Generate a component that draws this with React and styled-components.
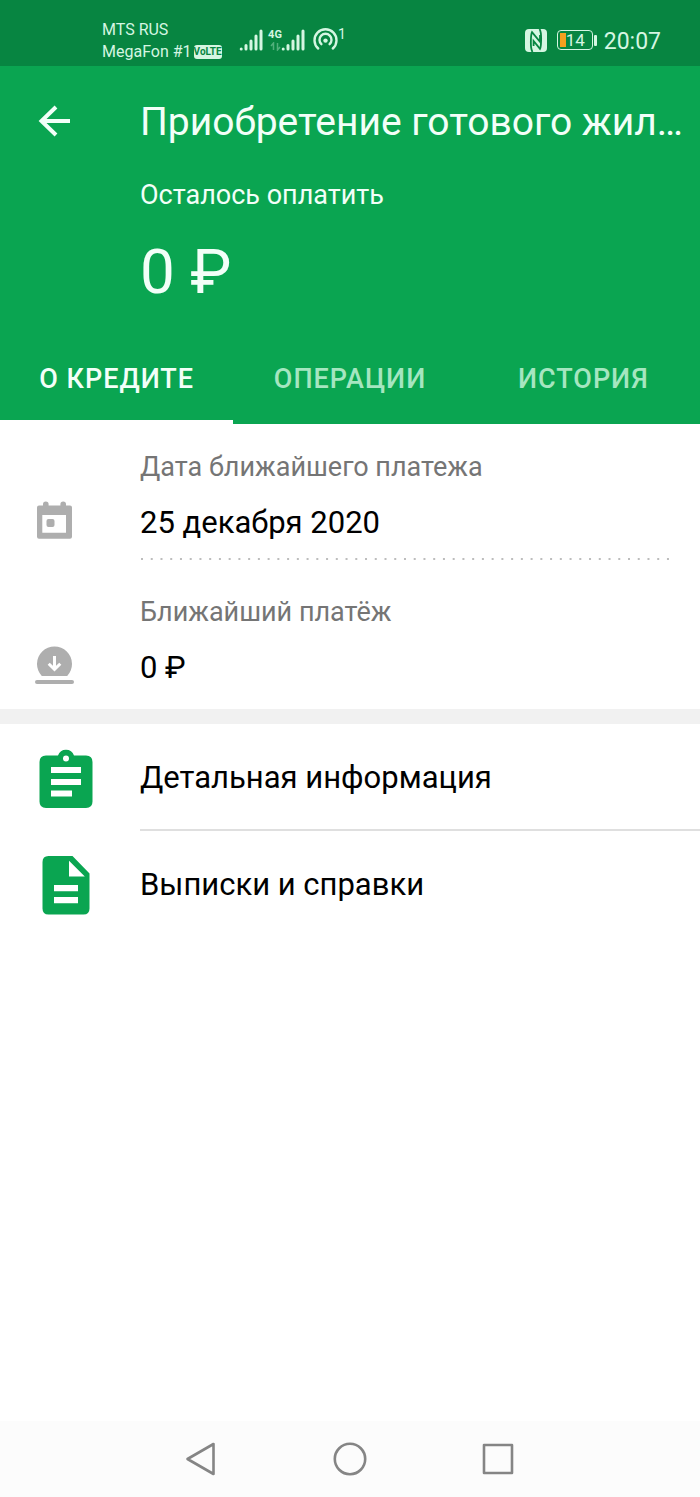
import React from "react";
import styled, { createGlobalStyle } from "styled-components";

const GlobalStyle = createGlobalStyle`
  *, *::before, *::after { box-sizing: border-box; }
  body { margin: 0; background: #fff; font-family: Roboto, "Noto Sans", sans-serif; color: #000; }
  button { font: inherit; border: 0; padding: 0; margin: 0; background: none; color: inherit; cursor: pointer; }
  svg { display: block; flex: none; }
`;

const Page = styled.div`
  min-height: 100vh;
  display: flex;
  flex-direction: column;
`;

const StatusBar = styled.div`
  height: 66px;
  padding: 14px 39px 0 102px;
  display: flex;
  justify-content: space-between;
  align-items: flex-start;
  background: #078541;
  color: #d5f6e2;
`;

const StatusGroup = styled.div`
  display: flex;
  align-items: center;
  height: 52px;
`;

const Carriers = styled.div`
  width: 137px;
  align-self: flex-start;
  padding-top: 5px;
  font-size: 16px;
  line-height: 22px;
  white-space: nowrap;
`;

const CarrierLine = styled.div`
  display: flex;
  align-items: center;
  gap: 2px;
  height: 22px;
`;

const VolteBadge = styled.span`
  width: 28px;
  height: 14px;
  border-radius: 3px;
  background: #d5f6e2;
  color: #078541;
  font-size: 10px;
  font-weight: 700;
  line-height: 14px;
  text-align: center;
`;

const Network = styled.div`
  display: flex;
  flex-direction: column;
  align-items: center;
  width: 12px;
  height: 24px;
  margin-left: 6px;
  font-size: 11px;
  font-weight: 700;
  line-height: 14px;
`;

const HotspotCount = styled.sup`
  align-self: flex-start;
  padding-top: 10px;
  font-size: 14px;
  line-height: 20px;
`;

const Hotspot = styled.span`
  margin-left: 8px;
`;

const Battery = styled.div`
  display: flex;
  align-items: center;
  width: 36px;
  height: 20px;
  margin-left: 10px;
  padding: 2px;
  border: 1px solid #d5f6e2;
  border-radius: 4px;
`;

const BatteryLevel = styled.span`
  width: 6px;
  height: 14px;
  background: #f6a01f;
`;

const BatteryValue = styled.span`
  font-size: 17px;
  line-height: 16px;
`;

const BatteryTip = styled.span`
  width: 3px;
  height: 11px;
  margin: 0 7px 0 1px;
  border-radius: 1px;
  background: #d5f6e2;
`;

const Clock = styled.time`
  padding-top: 3px;
  font-size: 23px;
  line-height: 28px;
`;

const Header = styled.header`
  background: #0aa551;
  color: #f2fff8;
`;

const Toolbar = styled.div`
  display: flex;
  align-items: flex-start;
  height: 112px;
  padding-right: 16px;
`;

const BackButton = styled.button`
  flex: none;
  width: 140px;
  height: 110px;
  padding-left: 38px;
`;

const Title = styled.h1`
  min-width: 0;
  margin: 0;
  overflow: hidden;
  text-overflow: ellipsis;
  white-space: nowrap;
  font-size: 39px;
  font-weight: 400;
  line-height: 113px;
`;

const Summary = styled.div`
  height: 155px;
  padding-left: 140px;
`;

const SummaryLabel = styled.div`
  font-size: 27px;
  line-height: 34px;
`;

const SummaryAmount = styled.div`
  padding-top: 22px;
  font-size: 62px;
  line-height: 76px;
`;

const Tabs = styled.div`
  display: grid;
  grid-template-columns: repeat(3, 1fr);
`;

const Tab = styled.button`
  && {
    height: 91px;
    padding-top: 4px;
    border-bottom: 4px solid ${(p) => (p.$active ? "#fff" : "transparent")};
    color: ${(p) => (p.$active ? "#f2fff8" : "#a5e6c0")};
    font-size: 27px;
    font-weight: 500;
    letter-spacing: 1px;
  }
`;

const Main = styled.main`
  flex: 1;
`;

const Details = styled.dl`
  margin: 0;
  padding: 16px 31px 6px 0;
  border-bottom: 15px solid #f1f1f1;
`;

const Detail = styled.div`
  display: grid;
  grid-template-columns: 140px 1fr;
  & + & {
    margin-top: 25px;
  }
`;

const DetailIcon = styled.div`
  padding: 61px 0 0 35px;
`;

const DetailLabel = styled.dt`
  padding-top: 10px;
  color: #757575;
  font-size: 27px;
  line-height: 34px;
`;

const DetailValue = styled.dd`
  margin: 0;
  padding: 19px 0 15px;
  font-size: 31px;
  line-height: 40px;
`;

const Menu = styled.nav`
  display: flex;
  flex-direction: column;
`;

const MenuItem = styled.button`
  && {
    display: flex;
    height: 107px;
    text-align: left;
  }
`;

const MenuIcon = styled.span`
  flex: none;
  width: 140px;
  padding-top: 20px;
  padding-left: 31px;
`;

const MenuLabel = styled.span`
  flex: 1;
  align-self: stretch;
  padding-top: 3px;
  font-size: 31px;
  line-height: 102px;
  border-bottom: ${(p) => (p.$divided ? "2px solid #dfdfdf" : "0")};
`;

const SystemNav = styled.nav`
  display: flex;
  justify-content: center;
  gap: 68px;
  height: 76px;
  background: #fcfcfc;
`;

const SystemButton = styled.button`
  && {
    display: grid;
    place-items: center;
    width: 80px;
    height: 76px;
  }
`;

const SignalIcon = () => (
  <svg width="24" height="22" viewBox="0 0 24 22" stroke="currentColor" strokeWidth="3" strokeLinecap="round">
    <path d="M2.2 20v.1M7 16.5V20M12 12V20M17 7V20M22 2V20" />
  </svg>
);

const TrafficIcon = () => (
  <svg width="11" height="9" viewBox="0 0 11 9" fill="none" stroke="#52b07c" strokeWidth="1.5">
    <path d="M1 4L3.5 1V8M10 5L7.5 8V1" />
  </svg>
);

const HotspotIcon = () => (
  <svg width="25" height="24" viewBox="0 0 25 24" fill="none" stroke="currentColor" strokeWidth="2.4" strokeLinecap="round">
    <path d="M5.2 20.5A11 11 0 1 1 19.8 20.5" />
    <path d="M8.4 16.2A6 6 0 1 1 16.6 16.2" />
    <circle cx="12.5" cy="12.6" r="2.2" fill="currentColor" stroke="none" />
  </svg>
);

const NfcIcon = () => (
  <svg width="22" height="23" viewBox="0 0 22 23">
    <rect width="22" height="23" rx="4" fill="currentColor" />
    <g fill="none" stroke="#078541" strokeWidth="1.8">
      <path d="M7.5 23Q5.6 20 5.9 11.5Q6 5 7 3.2L15 12.8V6" />
      <path d="M14.5 0Q16.4 3 16.1 11.5Q16 18 15 19.8L8.6 12V17" />
    </g>
  </svg>
);

const BackIcon = () => (
  <svg width="33" height="32" viewBox="0 0 33 32" fill="none" stroke="currentColor" strokeWidth="4">
    <path d="M18 2L3.5 16L18 30M4 16H32" />
  </svg>
);

const CalendarIcon = () => (
  <svg width="39" height="39" viewBox="0 0 39 39">
    <path fill="#aeaeae" fillRule="evenodd" d="M4 4.5H8V3.3A2.8 2.8 0 0 1 13.6 3.3V4.5H25.4V3.3A2.8 2.8 0 0 1 31 3.3V4.5H35Q37 4.5 37 6.5V35.7Q37 37.7 35 37.7H4Q2 37.7 2 35.7V6.5Q2 4.5 4 4.5ZM7.3 14V31.7H31V14Z" />
    <rect x="11.5" y="18" width="8" height="8" rx="2" fill="#aeaeae" />
  </svg>
);

const PaymentIcon = () => (
  <svg width="39" height="39" viewBox="0 0 39 39">
    <path fill="#aeaeae" d="M6.8 30A17.5 17.5 0 1 1 32.2 30Z" />
    <path d="M19.5 10V23M13.7 17.7L19.5 23.4L25.3 17.7" fill="none" stroke="#fff" strokeWidth="3" />
    <rect y="34" width="39" height="4" rx="2" fill="#aeaeae" />
  </svg>
);

const ClipboardIcon = () => (
  <svg width="70" height="70" viewBox="0 0 70 70">
    <path fill="#0aa551" fillRule="evenodd" d="M15 11.5H27A8.5 8.5 0 0 1 43 11.5H55Q61.5 11.5 61.5 18V57.5Q61.5 64 55 64H15Q8.5 64 8.5 57.5V18Q8.5 11.5 15 11.5ZM35 11.6A3 3 0 1 0 35 17.6A3 3 0 1 0 35 11.6ZM20 23V29H50V23ZM20 35V41H50V35ZM20 46.5V52.5H41V46.5Z" />
  </svg>
);

const DocumentIcon = () => (
  <svg width="70" height="70" viewBox="0 0 70 70">
    <path fill="#0aa551" fillRule="evenodd" d="M17.5 5H41.5L58.5 22.5V57.5Q58.5 63.5 52.5 63.5H17.5Q11.5 63.5 11.5 57.5V11Q11.5 5 17.5 5ZM38 9.8V25.5H53.8ZM23 34V40.3H47V34ZM23 46V52.3H47V46Z" />
  </svg>
);

const DottedRule = () => (
  <svg width="100%" height="2" aria-hidden="true">
    <line x1="1" y1="1" x2="100%" y2="1" stroke="#bdbdbd" strokeWidth="2" strokeDasharray="2 7.74" />
  </svg>
);

const NavShape = ({ children }) => (
  <svg width="36" height="36" viewBox="0 0 36 36" fill="none" stroke="#858585" strokeWidth="2.6" strokeLinejoin="round">
    {children}
  </svg>
);

const tabs = ["О КРЕДИТЕ", "ОПЕРАЦИИ", "ИСТОРИЯ"];

export default function App() {
  return (
    <Page>
      <GlobalStyle />
      <StatusBar>
        <StatusGroup>
          <Carriers>
            <CarrierLine>MTS RUS</CarrierLine>
            <CarrierLine>
              MegaFon #1 <VolteBadge>VoLTE</VolteBadge>
            </CarrierLine>
          </Carriers>
          <SignalIcon />
          <Network>
            4G
            <TrafficIcon />
          </Network>
          <SignalIcon />
          <Hotspot><HotspotIcon /></Hotspot>
          <HotspotCount>1</HotspotCount>
        </StatusGroup>
        <StatusGroup>
          <NfcIcon />
          <Battery>
            <BatteryLevel />
            <BatteryValue>14</BatteryValue>
          </Battery>
          <BatteryTip />
          <Clock>20:07</Clock>
        </StatusGroup>
      </StatusBar>
      <Header>
        <Toolbar>
          <BackButton aria-label="Назад"><BackIcon /></BackButton>
          <Title>Приобретение готового жил…</Title>
        </Toolbar>
        <Summary>
          <SummaryLabel>Осталось оплатить</SummaryLabel>
          <SummaryAmount>0 ₽</SummaryAmount>
        </Summary>
        <Tabs role="tablist">
          {tabs.map((name, i) => (
            <Tab key={name} role="tab" aria-selected={i === 0} $active={i === 0}>{name}</Tab>
          ))}
        </Tabs>
      </Header>
      <Main>
        <Details>
          <Detail>
            <DetailIcon><CalendarIcon /></DetailIcon>
            <div>
              <DetailLabel>Дата ближайшего платежа</DetailLabel>
              <DetailValue>25 декабря 2020</DetailValue>
              <DottedRule />
            </div>
          </Detail>
          <Detail>
            <DetailIcon><PaymentIcon /></DetailIcon>
            <div>
              <DetailLabel>Ближайший платёж</DetailLabel>
              <DetailValue>0 ₽</DetailValue>
            </div>
          </Detail>
        </Details>
        <Menu>
          <MenuItem>
            <MenuIcon><ClipboardIcon /></MenuIcon>
            <MenuLabel $divided>Детальная информация</MenuLabel>
          </MenuItem>
          <MenuItem>
            <MenuIcon><DocumentIcon /></MenuIcon>
            <MenuLabel>Выписки и справки</MenuLabel>
          </MenuItem>
        </Menu>
      </Main>
      <SystemNav>
        <SystemButton aria-label="Назад">
          <NavShape><path d="M3.5 18L29.5 3V33Z" /></NavShape>
        </SystemButton>
        <SystemButton aria-label="Домой">
          <NavShape><circle cx="18" cy="18" r="15.2" /></NavShape>
        </SystemButton>
        <SystemButton aria-label="Недавние">
          <NavShape><rect x="4" y="4" width="28" height="28" /></NavShape>
        </SystemButton>
      </SystemNav>
    </Page>
  );
}
